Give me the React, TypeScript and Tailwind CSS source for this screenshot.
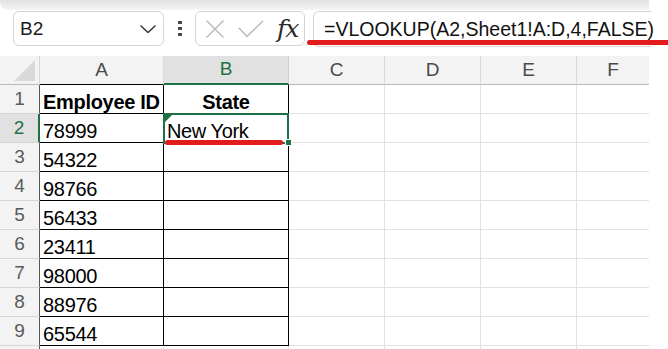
import React from "react";

const rows: { n: number; a: string; b: string }[] = [
  { n: 1, a: "Employee ID", b: "State" },
  { n: 2, a: "78999", b: "New York" },
  { n: 3, a: "54322", b: "" },
  { n: 4, a: "98766", b: "" },
  { n: 5, a: "56433", b: "" },
  { n: 6, a: "23411", b: "" },
  { n: 7, a: "98000", b: "" },
  { n: 8, a: "88976", b: "" },
  { n: 9, a: "65544", b: "" },
];

const font = { fontFamily: '"Liberation Sans", Arial, sans-serif' };

function FormulaBar() {
  return (
    <div className="flex items-start mt-px h-[36px]">
      {/* Name box */}
      <div className="ml-[13px] w-[151px] h-[35px] bg-white border border-[#d4d4d4] rounded-[6px] flex items-center justify-between pl-[6px] pr-[7px]">
        <span className="text-[19px] leading-[22px] text-[#1a1a1a]">B2</span>
        <svg width="16" height="9" viewBox="0 0 16 9" className="mt-[1px]">
          <polyline points="1,1 8,7.5 15,1" fill="none" stroke="#3a3a3a" strokeWidth="1.6" strokeLinejoin="round" strokeLinecap="round" />
        </svg>
      </div>
      {/* dots */}
      <div className="w-[31px] h-[35px] flex flex-col items-center justify-center gap-[2.5px]">
        <div className="w-[4px] h-[3.5px] bg-[#4a4a4a]" />
        <div className="w-[4px] h-[3.5px] bg-[#4a4a4a]" />
        <div className="w-[4px] h-[3.5px] bg-[#4a4a4a]" />
      </div>
      {/* cancel / enter / fx */}
      <div className="w-[110px] h-[35px] bg-white border border-[#d4d4d4] rounded-[6px] flex items-center pl-[9px]">
        <svg width="20" height="20" viewBox="0 0 20 20">
          <line x1="1.5" y1="1.5" x2="18.5" y2="18.5" stroke="#b9b9b9" strokeWidth="1.5" />
          <line x1="18.5" y1="1.5" x2="1.5" y2="18.5" stroke="#b9b9b9" strokeWidth="1.5" />
        </svg>
        <svg width="26" height="18" viewBox="0 0 26 18" className="ml-[13px]">
          <polyline points="1,8 9,16.5 25,1" fill="none" stroke="#b9b9b9" strokeWidth="1.5" />
        </svg>
        <span
          className="ml-[13px] italic text-[25px] leading-[25px] text-[#2a2a2a] tracking-[-1px]"
          style={{ fontFamily: '"DejaVu Serif", "Liberation Serif", serif' }}
        >
          fx
        </span>
      </div>
      {/* formula input */}
      <div className="ml-[8px] w-[338px] h-[36px] bg-white border border-[#d4d4d4] border-r-0 rounded-l-[6px] flex items-center pl-[10px]">
        <span className="text-[19.5px] leading-[22px] text-[#111] whitespace-nowrap">
          =VLOOKUP(A2,Sheet1!A:D,4,FALSE)
        </span>
      </div>
    </div>
  );
}

function Grid() {
  return (
    <div className="relative w-[649px] grid grid-cols-[40px_124px_125px_96px_96px_96px_72px] auto-rows-[29px]">
      {/* Header row */}
      <div className="relative bg-[#f3f3f3] border-b border-r border-b-[#b8b8b8] border-r-[#d6d6d6]">
        <svg width="21" height="21" viewBox="0 0 21 21" className="absolute left-[14px] top-[4px]">
          <polygon points="21,0 21,21 0,21" fill="#d9d9d9" />
        </svg>
      </div>
      <div className="bg-[#f3f3f3] border-b border-r border-b-black border-r-[#d9d9d9] flex items-center justify-center text-[19px] text-[#4a4a4a]">A</div>
      <div className="bg-[#e1e1e1] border-b-2 border-r border-b-[#1e7145] border-r-[#d0d0d0] flex items-center justify-center text-[19px] text-[#1e7145]">B</div>
      <div className="bg-[#f3f3f3] border-b border-r border-b-[#b8b8b8] border-r-[#d9d9d9] flex items-center justify-center text-[19px] text-[#4a4a4a]">C</div>
      <div className="bg-[#f3f3f3] border-b border-r border-b-[#b8b8b8] border-r-[#d9d9d9] flex items-center justify-center text-[19px] text-[#4a4a4a]">D</div>
      <div className="bg-[#f3f3f3] border-b border-r border-b-[#b8b8b8] border-r-[#d9d9d9] flex items-center justify-center text-[19px] text-[#4a4a4a]">E</div>
      <div className="bg-[#f3f3f3] border-b border-b-[#b8b8b8] flex items-center justify-center text-[19px] text-[#4a4a4a]">F</div>

      {rows.map((r) => (
        <React.Fragment key={r.n}>
          {r.n === 2 ? (
            <div className="bg-[#e1e1e1] border-b border-r-2 border-b-[#d6d6d6] border-r-[#1e7145] flex items-center justify-center text-[19px] text-[#1e7145]">
              {r.n}
            </div>
          ) : (
            <div className="bg-[#f3f3f3] border-b border-r border-b-[#d6d6d6] border-r-[#555] flex items-center justify-center text-[19px] text-[#5a5a5a]">
              {r.n}
            </div>
          )}
          <div
            className={
              r.n === 1
                ? "border-b border-r border-black flex items-end pl-[3px] text-[20px] leading-[22px] tracking-[-0.3px] font-bold text-black whitespace-nowrap"
                : "border-b border-r border-black flex items-end pl-[3px] text-[20px] leading-[22px] tracking-[-0.3px] text-black whitespace-nowrap"
            }
          >
            {r.a}
          </div>
          <div
            className={
              r.n === 1
                ? "border-b border-r border-black flex items-end justify-center text-[20px] leading-[22px] tracking-[-0.3px] font-bold text-black"
                : "border-b border-r border-black flex items-end pl-[3px] text-[20px] leading-[22px] tracking-[-0.4px] text-black whitespace-nowrap"
            }
          >
            {r.b}
          </div>
          <div className="border-b border-r border-[#e1e1e1]" />
          <div className="border-b border-r border-[#e1e1e1]" />
          <div className="border-b border-r border-[#e1e1e1]" />
          <div className="border-b border-[#e1e1e1]" />
        </React.Fragment>
      ))}
      {/* partial row 10 */}
      <div className="bg-[#f3f3f3] border-r border-r-[#555]" />
      <div className="border-r border-[#e1e1e1]" />
      <div className="border-r border-[#e1e1e1]" />
      <div className="border-r border-[#e1e1e1]" />
      <div className="border-r border-[#e1e1e1]" />
      <div className="border-r border-[#e1e1e1]" />
      <div />

      {/* selection B2 */}
      <div className="absolute left-[163px] top-[57px] w-[126px] h-[31px] border-2 border-[#1e7145] pointer-events-none" />
      <svg width="7" height="7" viewBox="0 0 7 7" className="absolute left-[165px] top-[59px]">
        <polygon points="0,0 7,0 0,7" fill="#1e7145" />
      </svg>
      <div className="absolute left-[285px] top-[83px] w-[7px] h-[7px] bg-[#1e7145] border border-white" />
    </div>
  );
}

export default function App() {
  return (
    <div className="relative w-[668px] h-[349px] overflow-hidden bg-white" style={font}>
      <div className="w-[649px] h-[10px] bg-gradient-to-b from-[#e2e2e2] to-[#f4f4f4] rounded-bl-[8px]" />
      <FormulaBar />
      <div className="h-[9px]" />
      <Grid />
      {/* annotation underlines */}
      <div className="absolute left-[307px] top-[40px] w-[361px] h-[5px] bg-[#e21c1c] rounded-l-full" />
      <div className="absolute left-[165px] top-[140px] w-[118px] h-[5px] bg-[#e21c1c] rounded-full" />
    </div>
  );
}
